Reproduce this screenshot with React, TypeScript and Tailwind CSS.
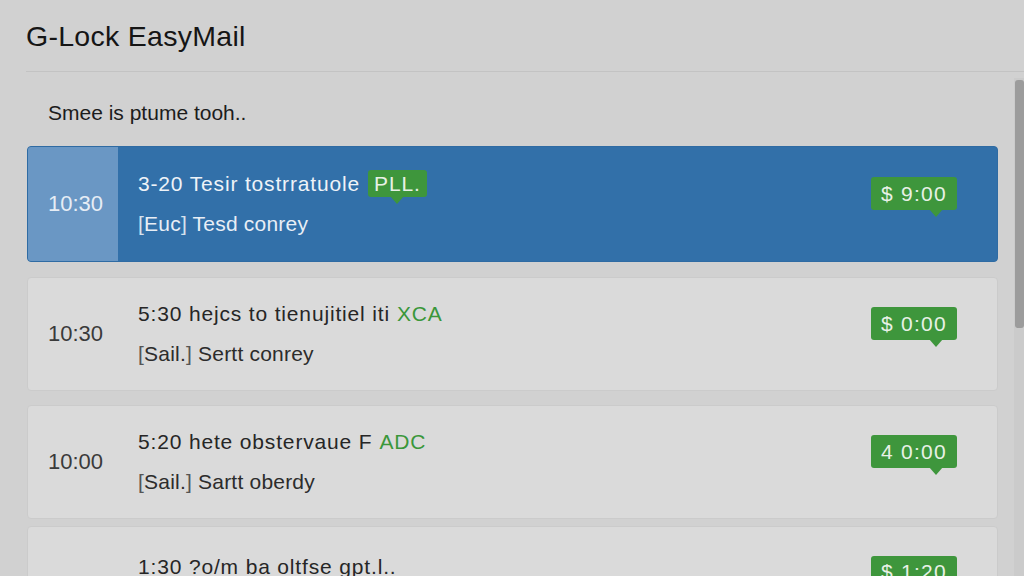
import React from "react";

interface Item {
  time?: string;
  title: string;
  tag?: string;
  tagKind?: "badge" | "text";
  sender?: string;
  subject?: string;
  price: string;
  active?: boolean;
  h: string;
  mt: string;
}

const items: Item[] = [
  {
    time: "10:30",
    title: "3-20 Tesir tostrratuole",
    tag: "PLL.",
    tagKind: "badge",
    sender: "Euc",
    subject: "Tesd conrey",
    price: "$ 9:00",
    active: true,
    h: "h-[116px]",
    mt: "mt-0",
  },
  {
    time: "10:30",
    title: "5:30 hejcs to tienujitiel iti",
    tag: "XCA",
    tagKind: "text",
    sender: "Sail.",
    subject: "Sertt conrey",
    price: "$ 0:00",
    h: "h-[114px]",
    mt: "mt-[15px]",
  },
  {
    time: "10:00",
    title: "5:20 hete obstervaue F",
    tag: "ADC",
    tagKind: "text",
    sender: "Sail.",
    subject: "Sartt oberdy",
    price: "4 0:00",
    h: "h-[114px]",
    mt: "mt-[14px]",
  },
  {
    // last row runs off the bottom; only the first line is in view
    title: "1:30 ?o/m ba oltfse gpt.l..",
    price: "$ 1:20",
    h: "h-[114px]",
    mt: "mt-[7px]",
  },
];

function Bubble({ text, className, tail }: { text: string; className?: string; tail: string }) {
  return (
    <div className={`relative flex items-center rounded-[3px] bg-[#3e963c] text-[#e8f1e6] ${className ?? ""}`}>
      {text}
      <span
        className={`absolute -bottom-[7px] ${tail} h-0 w-0 border-x-[7px] border-t-[8px] border-x-transparent border-t-[#3e963c]`}
      />
    </div>
  );
}

function Row({ item }: { item: Item }) {
  const a = item.active;
  const last = !item.sender;
  return (
    <div
      className={`${item.mt} ${item.h} flex overflow-hidden rounded-[4px] border ${
        a ? "border-[#2f6ba3] bg-[#3270a9]" : "border-[#cbcbcb] bg-[#dadada]"
      }`}
    >
      <div
        className={`flex w-[90px] shrink-0 items-center pl-[20px] text-[22px] ${
          a ? "bg-[#6a97c4] text-[#e6edf5]" : "text-[#3a3a3a]"
        }`}
      >
        {item.time}
      </div>
      <div className={`flex flex-1 pl-[20px] pr-[40px] ${last ? "items-start pt-[24px]" : "items-center"}`}>
        <div className="flex-1">
          <div
            className={`flex items-center text-[21px] tracking-[0.04em] ${a ? "text-[#eef3f8]" : "text-[#262626]"}`}
          >
            <span>{item.title}</span>
            {item.tag && item.tagKind === "badge" && (
              <Bubble
                text={item.tag}
                tail="left-[22px]"
                className="ml-[8px] h-[27px] px-[6px] text-[21px]"
              />
            )}
            {item.tag && item.tagKind === "text" && (
              <span className="ml-[7px] text-[#3a973a]">{item.tag}</span>
            )}
          </div>
          {item.sender && (
            <div className={`mt-[9px] text-[21px] tracking-[0.01em] ${a ? "text-[#e8eef6]" : "text-[#2c2c2c]"}`}>
              <span className={a ? "text-[#d6e2ee]" : "text-[#555]"}>[</span>
              {item.sender}
              <span className={a ? "text-[#d6e2ee]" : "text-[#555]"}>]</span> {item.subject}
            </div>
          )}
        </div>
        <Bubble
          text={item.price}
          tail="right-[14px]"
          className={`${last ? "mt-[5px]" : "mb-[20px]"} h-[33px] px-[10px] text-[21px] tracking-[0.06em]`}
        />
      </div>
    </div>
  );
}

export default function App() {
  return (
    <div
      className="relative h-[576px] w-[1024px] overflow-hidden bg-[#d1d1d1]"
      style={{ fontFamily: '"Liberation Sans", Arial, sans-serif' }}
    >
      <header className="ml-[26px] flex h-[72px] items-center border-b border-[#c3c3c3] pt-[2px]">
        <h1 className="text-[28.5px] tracking-[0.01em] text-[#151515]">G-Lock EasyMail</h1>
      </header>

      <div className="pl-[27px] pr-[26px]">
        <p className="pl-[21px] pt-[25px] text-[21px] text-[#1c1c1c]">Smee is ptume tooh..</p>
        <div className="mt-[17px]">
          {items.map((it, i) => (
            <Row key={i} item={it} />
          ))}
        </div>
      </div>

      {/* scrollbar */}
      <div className="absolute right-0 top-[78px] bottom-0 w-[10px] bg-[#cbcbcb]">
        <div className="mx-auto mt-[2px] h-[248px] w-[9px] rounded-[3px] bg-[#9c9c9c]" />
      </div>
    </div>
  );
}
